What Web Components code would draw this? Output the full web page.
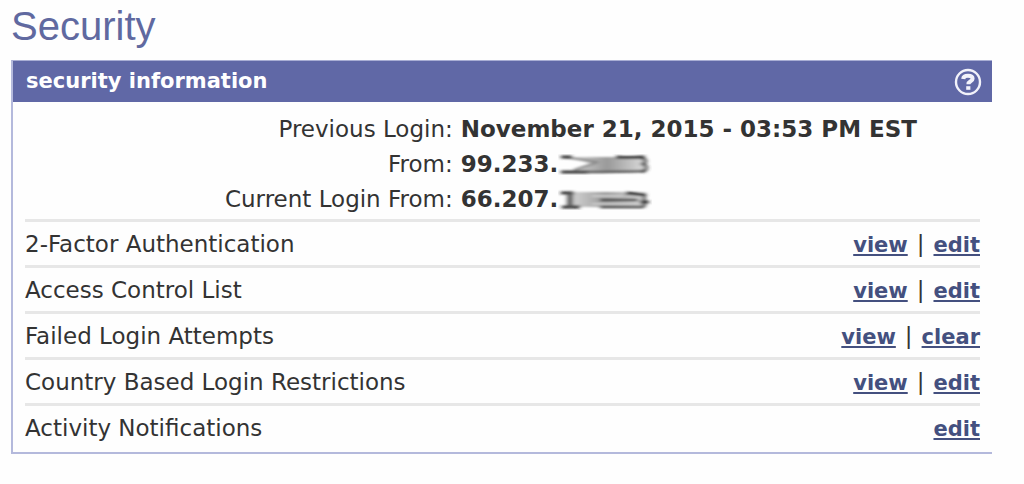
<!DOCTYPE html>
<html lang="en">
<head>
<meta charset="utf-8">
<title>Security</title>
<style>
body { margin: 0; background: #fefefe; color: #333; font: 23px/35px "DejaVu Sans", Verdana, sans-serif; }
</style>
</head>
<body>
<security-page></security-page>
<script>
const define = (name, html) => customElements.define(name, class extends HTMLElement {
  constructor() {
    super();
    this.attachShadow({ mode: 'open' }).innerHTML = html;
  }
});

define('help-button', `
<style>
:host { display: block; }
button { display: block; padding: 0; border: 0; background: none; color: #fff; cursor: pointer; }
svg { display: block; }
</style>
<button type="button" aria-label="Help">
<svg width="28" height="28" viewBox="0 0 28 28" fill="none" stroke="#f2f2fa" aria-hidden="true">
<circle cx="14" cy="14" r="12" stroke-width="2.4"/>
<path d="M9.200 11C9.400 8.400 11.300 7.800 14 7.800c2.900 0 4.600 1 4.600 2.900 0 2.900-4.200 2.300-4.200 5.500" stroke-width="4"/>
<path d="M12.200 18.200h4.200v3.600h-4.200z" fill="#f2f2fa" stroke="none"/>
</svg>
</button>`);

define('section-panel', `
<style>
:host { display: block; border-top: 1px solid #a9aed4; border-left: 2px solid #b4b9dc; border-bottom: 2px solid #b4b9dc; }
header { display: flex; align-items: center; justify-content: space-between; height: 41px; padding: 0 10px 0 13px; background: #6068a6; color: #fff; }
h2 { margin: 0; font-size: 21px; line-height: 41px; font-weight: bold; }
.body { padding: 10px 12px 3px; }
</style>
<header><h2><slot name="title"></slot></h2><help-button></help-button></header>
<div class="body"><slot></slot></div>`);

define('login-fact', `
<style>
:host { display: grid; grid-template-columns: 45% 1fr; align-items: baseline; }
.label { padding-right: 2px; text-align: right; }
.value { display: flex; align-items: center; padding-left: 6px; font-weight: bold; white-space: nowrap; }
</style>
<span class="label"><slot name="label"></slot></span>
<span class="value"><slot></slot></span>`);

const smudge = (name, shapes) => define(name, `
<style>:host { display: block; } svg { display: block; }</style>
<svg width="94" height="24" viewBox="0 0 94 24" aria-hidden="true">
<defs>
<filter id="b" x="-10%" y="-20%" width="120%" height="140%"><feGaussianBlur stdDeviation="2 .9"/></filter>
<linearGradient id="g"><stop offset="0" stop-color="#ddd"/><stop offset=".5" stop-color="#999"/><stop offset="1" stop-color="#ddd"/></linearGradient>
</defs>
<g filter="url(#b)">${shapes}</g></svg>`);

smudge('smudge-a', `
<path d="M10 4H88V19H10L34 11z" fill="url(#g)"/>
<path d="M5 4L40 9L16 17" fill="none" stroke="#888" stroke-width="2"/>
<path d="M3 4H14M58 4Q74 5 87 4M3 19H30" fill="none" stroke="#333" stroke-width="3"/>
<path d="M28 19Q60 19 87 18" fill="none" stroke="#555" stroke-width="2.500"/>
<path d="M82 4Q91 7 85 11Q92 15 84 19" fill="none" stroke="#333" stroke-width="3"/>`);
smudge('smudge-b', `
<path d="M8 4H88V19H8z" fill="url(#g)"/>
<path d="M3 5H16M4 19H22M68 5L88 7" fill="none" stroke="#222" stroke-width="3"/>
<path d="M12 5V19" stroke="#555" stroke-width="6"/>
<path d="M42 12H80M42 19H86" stroke="#444" stroke-width="2.500"/>
<path d="M34 8H65M34 16H78" stroke="#ccc" stroke-width="2"/>
<path d="M86 5V19M82 14H91" stroke="#333" stroke-width="3"/>`);

define('security-row', `
<style>
:host { display: flex; align-items: baseline; justify-content: space-between; padding-top: 2px; border-top: 3px solid #e7e7e7; line-height: 40px; }
nav { display: flex; align-items: baseline; gap: 9px; }
::slotted(a) { color: #44507f; font-size: 21px; font-weight: bold; text-decoration: underline; text-decoration-thickness: 2px; text-underline-offset: 2px; }
</style>
<span><slot name="label"></slot></span>
<nav><slot></slot></nav>`);

define('security-page', `
<style>
:host { display: block; padding: 0 32px 0 11px; }
h1 { margin: 0; color: #6069a0; font: 40px/52px "Liberation Sans", Arial, sans-serif; }
section-panel { margin-top: 8px; }
.facts { padding-bottom: 2px; }
</style>
<main>
<h1>Security</h1>
<section-panel>
<span slot="title">security information</span>
<div class="facts">
<login-fact><span slot="label">Previous Login:</span>November 21, 2015 - 03:53 PM EST</login-fact>
<login-fact><span slot="label">From:</span>99.233.<smudge-a></smudge-a></login-fact>
<login-fact><span slot="label">Current Login From:</span>66.207.<smudge-b></smudge-b></login-fact>
</div>
<security-row><span slot="label">2-Factor Authentication</span><a href="#2fa-view">view</a><span>|</span><a href="#2fa-edit">edit</a></security-row>
<security-row><span slot="label">Access Control List</span><a href="#acl-view">view</a><span>|</span><a href="#acl-edit">edit</a></security-row>
<security-row><span slot="label">Failed Login Attempts</span><a href="#failed-view">view</a><span>|</span><a href="#failed-clear">clear</a></security-row>
<security-row><span slot="label">Country Based Login Restrictions</span><a href="#country-view">view</a><span>|</span><a href="#country-edit">edit</a></security-row>
<security-row><span slot="label">Activity Notifications</span><a href="#activity-edit">edit</a></security-row>
</section-panel>
</main>`);
</script>
</body>
</html>
